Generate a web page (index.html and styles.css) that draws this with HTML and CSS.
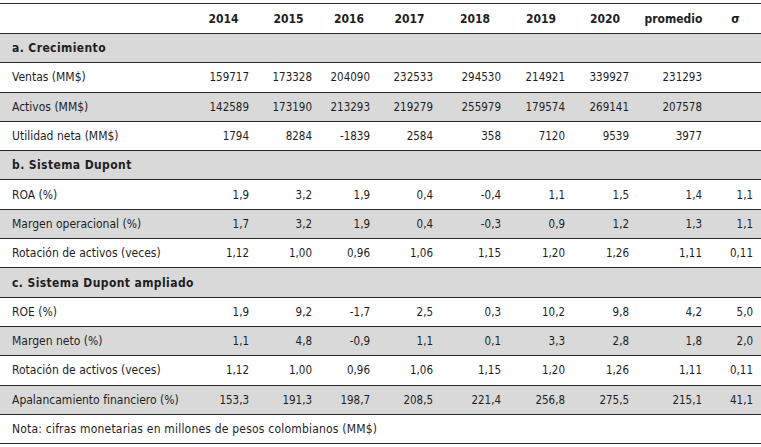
FILE: index.html
```html
<!DOCTYPE html>
<html lang="es">
<head>
<meta charset="utf-8">
<title>Indicadores</title>
<link rel="stylesheet" href="styles.css">
</head>
<body>
<table class="tbl">
  <colgroup>
    <col class="c-label"><col class="c-2014"><col class="c-2015"><col class="c-2016"><col class="c-2017"><col class="c-2018"><col class="c-2019"><col class="c-2020"><col class="c-prom"><col class="c-sigma">
  </colgroup>
  <thead>
    <tr class="head">
      <th></th><th>2014</th><th>2015</th><th>2016</th><th>2017</th><th>2018</th><th>2019</th><th>2020</th><th>promedio</th><th>σ</th>
    </tr>
  </thead>
  <tbody>
    <tr class="sec gray"><td colspan="10">a. Crecimiento</td></tr>
    <tr><td>Ventas (MM$)</td><td>159717</td><td>173328</td><td>204090</td><td>232533</td><td>294530</td><td>214921</td><td>339927</td><td>231293</td><td></td></tr>
    <tr class="gray"><td>Activos (MM$)</td><td>142589</td><td>173190</td><td>213293</td><td>219279</td><td>255979</td><td>179574</td><td>269141</td><td>207578</td><td></td></tr>
    <tr><td>Utilidad neta (MM$)</td><td>1794</td><td>8284</td><td>-1839</td><td>2584</td><td>358</td><td>7120</td><td>9539</td><td>3977</td><td></td></tr>
    <tr class="sec gray"><td colspan="10">b. Sistema Dupont</td></tr>
    <tr><td>ROA (%)</td><td>1,9</td><td>3,2</td><td>1,9</td><td>0,4</td><td>-0,4</td><td>1,1</td><td>1,5</td><td>1,4</td><td>1,1</td></tr>
    <tr class="gray"><td>Margen operacional (%)</td><td>1,7</td><td>3,2</td><td>1,9</td><td>0,4</td><td>-0,3</td><td>0,9</td><td>1,2</td><td>1,3</td><td>1,1</td></tr>
    <tr><td>Rotación de activos (veces)</td><td>1,12</td><td>1,00</td><td>0,96</td><td>1,06</td><td>1,15</td><td>1,20</td><td>1,26</td><td>1,11</td><td>0,11</td></tr>
    <tr class="sec gray"><td colspan="10">c. Sistema Dupont ampliado</td></tr>
    <tr><td>ROE (%)</td><td>1,9</td><td>9,2</td><td>-1,7</td><td>2,5</td><td>0,3</td><td>10,2</td><td>9,8</td><td>4,2</td><td>5,0</td></tr>
    <tr class="gray"><td>Margen neto (%)</td><td>1,1</td><td>4,8</td><td>-0,9</td><td>1,1</td><td>0,1</td><td>3,3</td><td>2,8</td><td>1,8</td><td>2,0</td></tr>
    <tr><td>Rotación de activos (veces)</td><td>1,12</td><td>1,00</td><td>0,96</td><td>1,06</td><td>1,15</td><td>1,20</td><td>1,26</td><td>1,11</td><td>0,11</td></tr>
    <tr class="gray"><td>Apalancamiento financiero (%)</td><td>153,3</td><td>191,3</td><td>198,7</td><td>208,5</td><td>221,4</td><td>256,8</td><td>275,5</td><td>215,1</td><td>41,1</td></tr>
    <tr class="note"><td colspan="10">Nota: cifras monetarias en millones de pesos colombianos (MM$)</td></tr>
  </tbody>
</table>
</body>
</html>
```

FILE: styles.css
```css
html, body {
  margin: 0;
  padding: 0;
  background: #ffffff;
}

body {
  font-family: "DejaVu Sans Condensed", "DejaVu Sans", sans-serif;
  font-size: 11.5px;
  color: #1e1e1e;
}

.tbl {
  margin-top: 3px;
  width: 761px;
  border-collapse: collapse;
  table-layout: fixed;
  border-top: 1px solid #2a2a2a;
}

.c-label { width: 190px; }
.c-2014 { width: 67px; }
.c-2015 { width: 63px; }
.c-2016 { width: 58px; }
.c-2017 { width: 63px; }
.c-2018 { width: 68px; }
.c-2019 { width: 64px; }
.c-2020 { width: 64px; }
.c-prom { width: 73px; }
.c-sigma { width: 51px; }

.tbl th,
.tbl td {
  padding: 0 8px 0 0;
  border-bottom: 1px solid #2a2a2a;
  vertical-align: middle;
  white-space: nowrap;
  text-align: right;
  height: 28.3px;
}

.tbl th {
  font-size: 12px;
  font-weight: bold;
  text-align: center;
  padding: 0;
  height: 29px;
}

.tbl td:first-child {
  font-size: 12px;
  text-align: left;
  padding-left: 12px;
}

.gray td {
  background: #d9d9d9;
}

.sec td {
  font-weight: bold;
  letter-spacing: 0.4px;
}

.note td {
  text-align: left;
  letter-spacing: 0.2px;
}
```
